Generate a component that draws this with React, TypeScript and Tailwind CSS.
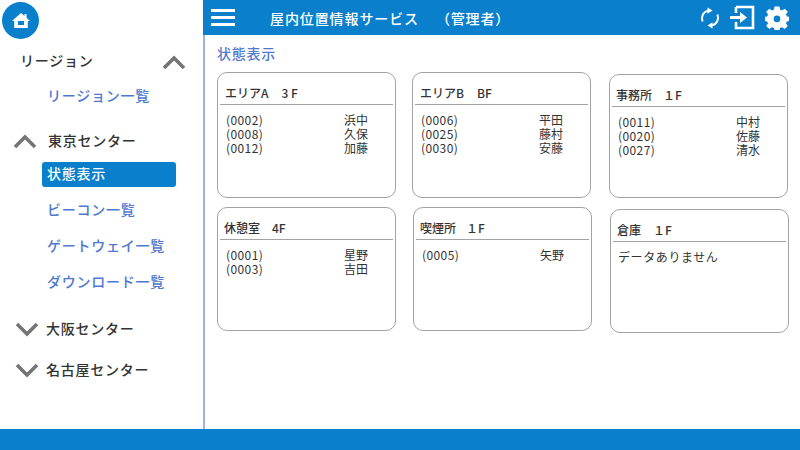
const FONT = "font-['Noto_Sans_CJK_JP','Noto_Sans_CJK_SC',sans-serif]"

type Person = { id: string; name: string }
type Area = { name: string; floor: string; people: Person[]; box: string; head: string }

const row1: Area[] = [
  { name: 'エリアA', floor: '3 F', head: 'gap-[13px] pl-[5px]', box: 'ml-0 h-[126px]', people: [{ id: '(0002)', name: '浜中' }, { id: '(0008)', name: '久保' }, { id: '(0012)', name: '加藤' }] },
  { name: 'エリアB', floor: 'BF', head: 'gap-[13px] pl-[5px]', box: 'ml-[16px] h-[126px]', people: [{ id: '(0006)', name: '平田' }, { id: '(0025)', name: '藤村' }, { id: '(0030)', name: '安藤' }] },
  { name: '事務所', floor: '１F', head: 'gap-[11px] pl-[4px]', box: 'mt-[2px] ml-[18px] h-[124px]', people: [{ id: '(0011)', name: '中村' }, { id: '(0020)', name: '佐藤' }, { id: '(0027)', name: '清水' }] },
]

const row2: Area[] = [
  { name: '休憩室', floor: '4F', head: 'gap-[12px] pl-[4px]', box: 'ml-0 h-[124px]', people: [{ id: '(0001)', name: '星野' }, { id: '(0003)', name: '吉田' }] },
  { name: '喫煙所', floor: '１F', head: 'gap-[10px] pl-[4px]', box: 'ml-[17px] h-[124px]', people: [{ id: '(0005)', name: '矢野' }] },
  { name: '倉庫', floor: '１F', head: 'gap-[12px] pl-[4px]', box: 'mt-[2px] ml-[18px] h-[124px]', people: [] },
]

const Chevron = ({ up, className }: { up?: boolean; className?: string }) => (
  <svg width="24" height="16" viewBox="0 0 24 16" className={className}>
    <path d={up ? 'M2 14 L12 4 L22 14' : 'M2 3 L12 13 L22 3'} fill="none" stroke="#757575" strokeWidth="3.6" />
  </svg>
)

const AreaCard = ({ area }: { area: Area }) => (
  <div className={`w-[179px] shrink-0 rounded-[10px] border border-[#a3a3a3] bg-white px-[2px] pt-[12px] ${area.box}`}>
    <div className={`flex h-[20px] border-b border-[#a3a3a3] text-[12px] leading-[16px] font-medium text-[#333] ${area.head}`}>
      <span>{area.name}</span>
      <span>{area.floor}</span>
    </div>
    {area.people.length === 0 && <div className="mt-[6px] pl-[5px] text-[12px] leading-[18px] tracking-[0.6px] text-[#333]">データありません</div>}
    <div className="mt-[8px] flex flex-col">
      {area.people.map((p) => (
        <div key={p.id} className="flex h-[14px] items-center pl-[6px] text-[12px] leading-[14px] text-[#333]">
          <span className="w-[118px] tracking-[0.4px]">{p.id}</span>
          <span>{p.name}</span>
        </div>
      ))}
    </div>
  </div>
)

const SubLink = ({ label, mt }: { label: string; mt: string }) => (
  <div className={`pl-[47px] text-[14px] leading-[20px] font-medium tracking-[0.75px] text-[#4f78d0] ${mt}`}>{label}</div>
)

export default function App() {
  return (
    <div className={`flex h-[450px] w-[800px] flex-col overflow-hidden bg-white ${FONT}`}>
      <div className="flex min-h-0 flex-1">
        {/* sidebar */}
        <aside className="flex w-[205px] shrink-0 flex-col border-r-2 border-[#9db4e4] pt-[2px]">
          <div className="ml-[2px] flex h-[37px] w-[37px] items-center justify-center rounded-full bg-[#0a80cc]">
            <svg width="18" height="16" viewBox="0 0 18 16">
              <path fill="#fff" d="M9 0 L12.5 3 V1 H14.5 V4.7 L18 8 H15.8 V15 H2.2 V8 H0 Z M6 8 V12 H12 V8 Z" fillRule="evenodd" />
            </svg>
          </div>
          <div className="mt-[11px] flex h-[20px] items-center pr-[17px] pl-[20px]">
            <span className="text-[14px] leading-[20px] font-medium tracking-[0.75px] text-[#333]">リージョン</span>
            <Chevron up className="mt-[4px] ml-auto" />
          </div>
          <SubLink label="リージョン一覧" mt="mt-[15px]" />
          <div className="mt-[25px] flex h-[20px] items-center pl-[13px]">
            <Chevron up className="mt-[1px] mr-[11px]" />
            <span className="text-[14px] leading-[20px] font-medium tracking-[0.75px] text-[#333]">東京センター</span>
          </div>
          <div className="mt-[12px] ml-[42px] h-[25px] w-[134px] rounded-[3px] bg-[#0a80cc] pl-[5px] text-[14px] leading-[23px] font-medium tracking-[0.75px] text-white">状態表示</div>
          <SubLink label="ビーコン一覧" mt="mt-[12px]" />
          <SubLink label="ゲートウェイ一覧" mt="mt-[16px]" />
          <SubLink label="ダウンロード一覧" mt="mt-[16px]" />
          <div className="mt-[27px] flex h-[20px] items-center pl-[15px]">
            <Chevron className="mt-[2px] mr-[7px]" />
            <span className="text-[14px] leading-[20px] font-medium tracking-[0.75px] text-[#333]">大阪センター</span>
          </div>
          <div className="mt-[21px] flex h-[20px] items-center pl-[15px]">
            <Chevron className="mt-[2px] mr-[7px]" />
            <span className="text-[14px] leading-[20px] font-medium tracking-[0.75px] text-[#333]">名古屋センター</span>
          </div>
        </aside>

        <div className="-ml-[2px] flex min-w-0 flex-1 flex-col">
          {/* header */}
          <header className="flex h-[35px] shrink-0 items-center bg-[#0a80cc] text-white">
            <div className="ml-[8px] flex w-[24px] flex-col gap-[4px]">
              <div className="h-[3px] bg-white" />
              <div className="h-[3px] bg-white" />
              <div className="h-[3px] bg-white" />
            </div>
            <div className="ml-[35px] text-[14px] leading-[20px] font-medium tracking-[0.9px]">屋内位置情報サービス</div>
            <div className="ml-[17px] text-[14px] leading-[20px] font-medium tracking-[0.8px]">（管理者）</div>
            <div className="mr-[11px] ml-auto flex items-center">
              <svg width="22" height="22" viewBox="0 0 22 22" className="mr-[9px]">
                <path d="M3.6 14.5 A8 8 0 0 1 9 3.6" fill="none" stroke="#fff" strokeWidth="2" />
                <path d="M8.5 0.5 L13.5 3.5 L8.5 6.8 Z" fill="#fff" />
                <path d="M18.4 7.5 A8 8 0 0 1 13 18.4" fill="none" stroke="#fff" strokeWidth="2" />
                <path d="M13.5 15.2 L8.5 18.5 L13.5 21.5 Z" fill="#fff" />
              </svg>
              <svg width="25" height="25" viewBox="0 0 25 25" className="mr-[10px]">
                <path d="M6 2 H23 V23 H6 V17 M6 8 V2" fill="none" stroke="#fff" strokeWidth="2.6" />
                <path d="M0 11 H10 V7 L17 12.5 L10 18 V14 H0 Z" fill="#fff" />
              </svg>
              <svg width="24" height="24" viewBox="0 0 24 24">
                <path fill="#fff" fillRule="evenodd" d="M9.5 0.5 H14.5 L15 3.6 L17 4.5 L19.7 2.7 L22.8 5.8 L21 8.4 L21.8 10.4 L24 10.8 V15 L21.8 15.4 L21 17.4 L22.8 20 L19.7 23 L17 21.3 L15 22.1 L14.5 24.5 H9.5 L9 22.1 L7 21.3 L4.3 23 L1.2 20 L3 17.4 L2.2 15.4 L0 15 V10.8 L2.2 10.4 L3 8.4 L1.2 5.8 L4.3 2.7 L7 4.5 L9 3.6 Z M12 9.6 A3.3 3.3 0 1 0 12 16.2 A3.3 3.3 0 1 0 12 9.6 Z" />
              </svg>
            </div>
          </header>

          {/* main */}
          <main className="flex min-h-0 flex-1 flex-col pl-[14px]">
            <h1 className="mt-[8px] text-[14px] leading-[20px] font-medium tracking-[0.75px] text-[#4f78d0]">状態表示</h1>
            <div className="mt-[9px] flex items-start">
              {row1.map((a) => <AreaCard key={a.name} area={a} />)}
            </div>
            <div className="mt-[9px] flex items-start">
              {row2.map((a) => <AreaCard key={a.name} area={a} />)}
            </div>
          </main>
        </div>
      </div>
      <footer className="h-[21px] shrink-0 bg-[#0a80cc]" />
    </div>
  )
}
